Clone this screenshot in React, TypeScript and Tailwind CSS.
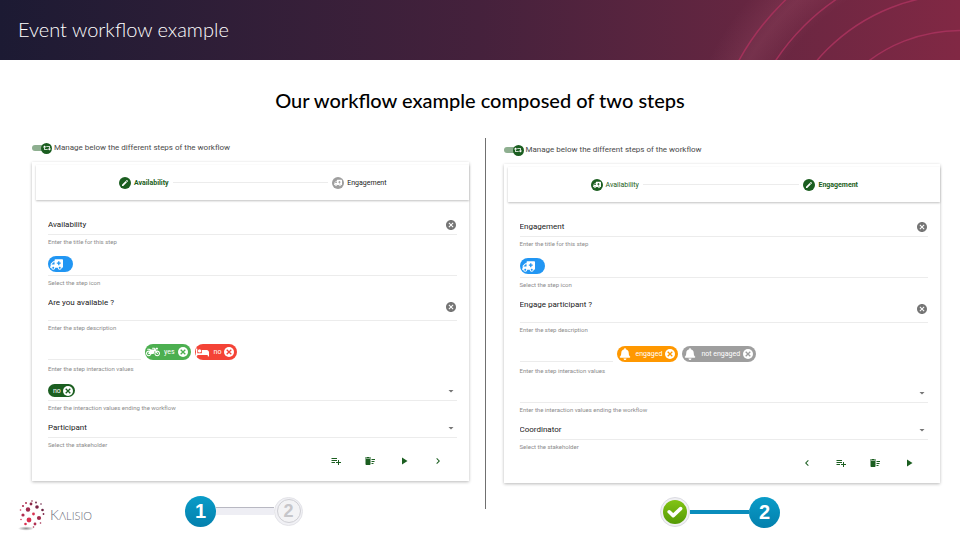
import React from "react";
import {
  MdArrowDropDown,
  MdCancel,
  MdChevronLeft,
  MdChevronRight,
  MdDeleteSweep,
  MdEdit,
  MdPlayArrow,
  MdPlaylistAdd,
} from "react-icons/md";
import { FaAmbulance, FaBed, FaBell, FaMotorcycle, FaRetweet } from "react-icons/fa";

type Chip = { label: string; color: string; icon: React.ReactNode };

type Panel = {
  id: string;
  active: "availability" | "engagement";
  title: string;
  description: string;
  values: Chip[];
  ending: string[];
  stakeholder: string;
  actions: { name: string; icon: React.ReactNode }[];
};

const add = { name: "Add step", icon: <MdPlaylistAdd size={12} /> };
const remove = { name: "Remove step", icon: <MdDeleteSweep size={12} /> };
const play = { name: "Preview", icon: <MdPlayArrow size={12} /> };
const next = { name: "Next step", icon: <MdChevronRight size={12} /> };
const previous = { name: "Previous step", icon: <MdChevronLeft size={12} /> };

const panels: Panel[] = [
  {
    id: "first",
    active: "availability",
    title: "Availability",
    description: "Are you available ?",
    values: [
      { label: "yes", color: "bg-[#4caf50] text-[#4caf50]", icon: <FaMotorcycle size={14} /> },
      { label: "no", color: "bg-[#f44336] text-[#f44336]", icon: <FaBed size={13} /> },
    ],
    ending: ["no"],
    stakeholder: "Participant",
    actions: [add, remove, play, next],
  },
  {
    id: "second",
    active: "engagement",
    title: "Engagement",
    description: "Engage participant ?",
    values: [
      { label: "engaged", color: "bg-[#ff9800] text-[#ff9800]", icon: <FaBell size={12} /> },
      { label: "not engaged", color: "bg-[#9e9e9e] text-[#9e9e9e]", icon: <FaBell size={12} /> },
    ],
    ending: [],
    stakeholder: "Coordinator",
    actions: [previous, add, remove, play],
  },
];

function Header() {
  return (
    <header className="relative flex h-[60px] items-center overflow-hidden bg-linear-to-r from-[#1c1a33] via-[#45213c] to-[#812844] px-[18px] pb-[2px]">
      <svg className="absolute top-0 right-0" width="260" height="60" viewBox="700 0 260 60" fill="none" aria-hidden="true">
        <defs>
          <radialGradient id="halo" gradientUnits="userSpaceOnUse" cx="960" cy="182" r="280">
            <stop offset="0.76" stopColor="#ff9ab0" stopOpacity="0" />
            <stop offset="0.87" stopColor="#ff9ab0" stopOpacity="0.1" />
            <stop offset="1" stopColor="#ff9ab0" stopOpacity="0" />
          </radialGradient>
        </defs>
        <circle cx="960" cy="182" r="280" fill="url(#halo)" />
        <g stroke="#a3315a" strokeWidth="1.5">
          <circle cx="960" cy="182.5" r="252.5" />
          <circle cx="960" cy="182.5" r="221" />
          <circle cx="960" cy="182.5" r="188" />
          <circle cx="960" cy="182.5" r="152" />
        </g>
      </svg>
      <h1 className="text-[20px] leading-6 font-light text-white">Event workflow example</h1>
    </header>
  );
}

function StepTab({ label, active, done }: { label: string; active: boolean; done: boolean }) {
  const green = active || done;
  return (
    <div className="flex items-center gap-[3px]">
      <span
        className={`flex size-3 items-center justify-center rounded-full text-white ${green ? "bg-[#1b5e20]" : "bg-[#9e9e9e]"}`}
      >
        {active ? <MdEdit size={8} /> : <FaAmbulance size={8} className="-scale-x-100" />}
      </span>
      <span
        className={`text-[7px] leading-3 ${active ? "font-bold text-[#1b5e20]" : done ? "text-[#1b5e20]" : "text-[#212121]"}`}
      >
        {label}
      </span>
    </div>
  );
}

function ClearButton({ name }: { name: string }) {
  return (
    <button type="button" aria-label={name} className="text-[#757575]">
      <MdCancel size={12} />
    </button>
  );
}

function ChipView({ chip }: { chip: Chip }) {
  return (
    <span className={`flex h-4 items-center rounded-full pr-[3px] pl-px ${chip.color}`}>
      <span className="flex w-[14px] justify-center text-white">{chip.icon}</span>
      <span className="mr-[3px] ml-[4px] text-[7px] leading-3 text-white">{chip.label}</span>
      <button type="button" aria-label={`Remove ${chip.label}`} className="flex size-[10px] items-center justify-center rounded-full bg-white">
        <Cross />
      </button>
    </span>
  );
}

function Cross() {
  return (
    <svg width="6" height="6" viewBox="0 0 6 6" stroke="currentColor" strokeWidth="1.3" aria-hidden="true">
      <path d="M0.7 0.7 5.3 5.3M5.3 0.7 0.7 5.3" />
    </svg>
  );
}

const line = "border-b border-[#ececec]";
const hint = "block h-[14px] text-[6px] leading-[13px] text-[#8c8c8c]";
const input = "min-w-0 flex-1 bg-transparent text-[8px] leading-4 text-[#212121] outline-none";

function WorkflowPanel({ panel, className }: { panel: Panel; className: string }) {
  const id = (name: string) => `${panel.id}-${name}`;
  return (
    <section className={`font-[Roboto,sans-serif] ${className}`}>
      <div className="flex h-4 items-center">
        <span className="relative flex h-3 w-[20px] items-center">
          <input id={id("manage")} type="checkbox" defaultChecked className="h-[6px] w-4 appearance-none rounded-full bg-[#8eaf90]" />
          <span className="pointer-events-none absolute right-0 flex size-[11px] items-center justify-center rounded-full bg-[#1b5e20] text-white">
            <FaRetweet size={8} />
          </span>
        </span>
        <label htmlFor={id("manage")} className="pl-[2px] text-[8px] leading-4 text-[#4a4a4a]">
          Manage below the different steps of the workflow
        </label>
      </div>

      <div className="mt-[6px] bg-white pt-[3px] pb-[11px] shadow-[0_1px_3px_rgba(0,0,0,0.28)]">
        <nav className="ml-1 flex h-[35px] items-center pr-[82px] pl-[83px] shadow-[0_1px_2px_rgba(0,0,0,0.25)]">
          <StepTab label="Availability" active={panel.active === "availability"} done />
          <span className="mx-[4px] h-px flex-1 bg-[#ececec]" />
          <StepTab label="Engagement" active={panel.active === "engagement"} done={false} />
        </nav>

        <form className="pr-3 pl-4" onSubmit={(e) => e.preventDefault()}>
          <div className={`flex h-[35px] items-end ${line}`}>
            <input id={id("title")} defaultValue={panel.title} className={`${input} mb-px`} />
            <span className="mb-[3px] flex">
              <ClearButton name="Clear title" />
            </span>
          </div>
          <label htmlFor={id("title")} className={hint}>Enter the title for this step</label>

          <div className={`flex h-[27px] items-end pb-[3px] ${line}`}>
            <button type="button" aria-label="Step icon" className="flex h-4 w-[25px] items-center rounded-full bg-[#2196f3] pl-[2px] text-white">
              <FaAmbulance size={13} className="-scale-x-100" />
            </button>
          </div>
          <span className={hint}>Select the step icon</span>

          <div className={`flex h-[31px] items-center ${line}`}>
            <input id={id("description")} defaultValue={panel.description} className={`${input} mb-[4px]`} />
            <span className="mt-[4px] flex">
              <ClearButton name="Clear description" />
            </span>
          </div>
          <label htmlFor={id("description")} className={hint}>Enter the step description</label>

          <div className="flex h-[27px] items-end gap-[4px] pb-[2px]">
            <input id={id("values")} className="h-4 w-[93px] border-b border-[#ececec] text-[8px] outline-none" />
            {panel.values.map((chip) => (
              <ChipView key={chip.label} chip={chip} />
            ))}
          </div>
          <label htmlFor={id("values")} className={hint}>Enter the step interaction values</label>

          <div className={`flex h-[25px] items-end pb-[3px] ${line}`}>
            {panel.ending.map((label) => (
              <span key={label} className="flex h-[13px] items-center gap-[2px] rounded-full bg-[#1b5e20] pr-[2px] pl-[5px] text-[7px] leading-3 text-white">
                {label}
                <button type="button" aria-label={`Remove ${label}`} className="flex size-[10px] items-center justify-center rounded-full bg-white text-[#1b5e20]">
                  <Cross />
                </button>
              </span>
            ))}
            <select id={id("ending")} className="h-[13px] min-w-0 flex-1 appearance-none bg-transparent text-[8px] outline-none">
              <option value="" />
            </select>
            <MdArrowDropDown size={12} className="text-[#757575]" />
          </div>
          <label htmlFor={id("ending")} className={hint}>Enter the interaction values ending the workflow</label>

          <div className={`flex h-[23px] items-end pb-px ${line}`}>
            <select id={id("stakeholder")} className={`${input} h-4 appearance-none`}>
              <option>{panel.stakeholder}</option>
            </select>
            <MdArrowDropDown size={12} className="mb-[2px] text-[#757575]" />
          </div>
          <label htmlFor={id("stakeholder")} className={hint}>Select the stakeholder</label>

          <div className="flex h-[18px] items-center justify-end gap-[22px] pr-[13px] text-[#1b5e20]">
            {panel.actions.map((action) => (
              <button key={action.name} type="button" aria-label={action.name}>
                {action.icon}
              </button>
            ))}
          </div>
        </form>
      </div>
    </section>
  );
}

const dots: [number, number, number, string][] = [
  [13, 2, 0.8, "#8a3050"], [7, 4, 1, "#b03052"], [17, 3.5, 0.9, "#6d2444"], [4, 7, 1.1, "#b03052"],
  [12, 5, 1.4, "#8a2848"], [18, 8, 1.8, "#7a2446"], [22, 5, 0.8, "#6d2444"], [9, 10.5, 2.2, "#a02a4c"],
  [1.5, 11, 0.8, "#d0405f"], [23.5, 11, 1.3, "#6d2444"], [4, 16, 1.6, "#b02c4e"],
  [14.5, 15, 1.4, "#d8304f"], [24.5, 15, 0.9, "#7a2446"], [10, 21, 2.4, "#d8304f"],
  [20, 19, 2.1, "#a02a4c"], [2, 20.5, 0.8, "#d0405f"], [6.5, 25, 1.3, "#d8304f"],
  [16, 25, 1.4, "#b03052"], [21.5, 24, 0.8, "#a02a4c"], [14.5, 28, 0.8, "#b03052"],
];

function Logo() {
  return (
    <div className="flex items-center gap-[4px]">
      <svg width="28" height="32" viewBox="-1 0 28 32" aria-hidden="true">
        <defs>
          <radialGradient id="ground">
            <stop offset="0" stopColor="#777" stopOpacity="0.8" />
            <stop offset="1" stopColor="#777" stopOpacity="0" />
          </radialGradient>
        </defs>
        <ellipse cx="7" cy="29.5" rx="8" ry="2.2" fill="url(#ground)" />
        {dots.map(([cx, cy, r, fill]) => (
          <circle key={`${cx}-${cy}`} cx={cx} cy={cy} r={r} fill={fill} />
        ))}
      </svg>
      <span className="text-[14px] leading-4 font-light text-[#6b6b78]">
        K<span className="text-[11px]">ΛLISIO</span>
      </span>
    </div>
  );
}

const blueDisc =
  "flex size-[31px] items-center justify-center rounded-full bg-linear-to-b from-[#0a9cc8] to-[#0480ad] text-[20px] leading-6 font-bold text-white";

export default function App() {
  return (
    <div className="min-h-screen bg-white font-[Lato,sans-serif]">
      <Header />
      <main>
        <h2 className="pt-[28px] text-center text-[20px] leading-6 font-medium text-black">
          Our workflow example composed of two steps
        </h2>
        <div className="flex pt-[26px] pr-5 pl-8">
          <WorkflowPanel panel={panels[0]} className="flex-1 pt-[2px]" />
          <div className="mr-[18px] ml-4 h-[371px] w-px bg-[#707070]" />
          <WorkflowPanel panel={panels[1]} className="flex-1 pt-1" />
        </div>
      </main>
      <footer className="-mt-[18px] grid grid-cols-2 pr-5 pl-[18px]">
        <div className="flex items-center">
          <div className="pt-[8px]">
            <Logo />
          </div>
          <div className="ml-[93px] flex items-center font-['Liberation_Sans',sans-serif]">
            <span className={blueDisc}>1</span>
            <span className="h-[8px] w-[58px] border-t border-[#b8b8c2] bg-[#eeeef4]" />
            <span className="flex size-[29px] items-center justify-center rounded-full border border-[#e3e3e8] bg-[#f1f1f5]">
              <span className="flex size-[24px] items-center justify-center rounded-full border border-[#cfcfd4] bg-[#f3f3f5] text-[18px] leading-5 font-bold text-[#c6c6ca]">
                2
              </span>
            </span>
          </div>
        </div>
        <div className="flex items-center pt-[2px] pl-[181px] font-['Liberation_Sans',sans-serif]">
          <span className="flex size-[30px] items-center justify-center rounded-full border border-[#dcdce2] bg-[#f0f0f4]">
            <span className="flex size-[24px] items-center justify-center rounded-full bg-linear-to-b from-[#82c414] to-[#559a06]">
              <svg width="16" height="12" viewBox="0 0 16 12" fill="none" stroke="#fff" strokeWidth="3.6" strokeLinecap="round" strokeLinejoin="round" aria-label="Done">
                <path d="M2.2 5.8 6.2 9.6 13.6 2.6" />
              </svg>
            </span>
          </span>
          <span className="h-[4px] w-[59px] bg-[#0a8dbc]" />
          <span className={blueDisc}>2</span>
        </div>
      </footer>
    </div>
  );
}
